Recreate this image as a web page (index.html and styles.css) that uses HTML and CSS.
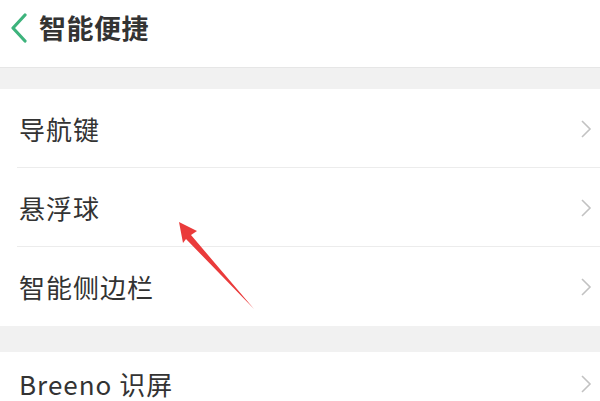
FILE: index.html
```html
<!DOCTYPE html>
<html>
<head>
<meta charset="utf-8">
<link rel="stylesheet" href="styles.css">
</head>
<body>
<div class="page">
  <header class="header">
    <svg class="back" width="20" height="30" viewBox="0 0 20 30"><path d="M16 2 L4 15 L16 28" fill="none" stroke="#3db37c" stroke-width="3.2" stroke-linecap="round" stroke-linejoin="round"/></svg>
    <h1 class="title">智能便捷</h1>
  </header>
  <div class="gap gap1"></div>
  <section class="card">
    <div class="row"><span class="label">导航键</span><svg class="chev" width="12" height="20" viewBox="0 0 12 20"><path d="M2 2 L10 10 L2 18" fill="none" stroke="#c2c2c2" stroke-width="1.6"/></svg></div>
    <div class="row"><span class="label">悬浮球</span><svg class="chev" width="12" height="20" viewBox="0 0 12 20"><path d="M2 2 L10 10 L2 18" fill="none" stroke="#c2c2c2" stroke-width="1.6"/></svg></div>
    <div class="row last"><span class="label">智能侧边栏</span><svg class="chev" width="12" height="20" viewBox="0 0 12 20"><path d="M2 2 L10 10 L2 18" fill="none" stroke="#c2c2c2" stroke-width="1.6"/></svg></div>
  </section>
  <div class="gap gap2"></div>
  <section class="card bottom">
    <div class="row last"><span class="label">Breeno 识屏</span><svg class="chev" width="12" height="20" viewBox="0 0 12 20"><path d="M2 2 L10 10 L2 18" fill="none" stroke="#c2c2c2" stroke-width="1.6"/></svg></div>
  </section>
  <svg class="pointer" width="600" height="401" viewBox="0 0 600 401">
    <polygon points="179,222 197,231 191,235 254,309 186,239 183,243" fill="#ea3b3b"/>
  </svg>
</div>
</body>
</html>
```
FILE: styles.css
```css
* { box-sizing: border-box; margin: 0; padding: 0; }
html, body { width: 600px; height: 401px; overflow: hidden; background: #fff; }
body { font-family: "Noto Sans CJK SC", "Noto Sans", sans-serif; color: #333; }
.page { position: relative; width: 600px; height: 401px; overflow: hidden; }
.header { height: 67px; display: flex; align-items: center; padding-left: 9px; gap: 10px; padding-bottom: 12px; }
.back { display: block; }
.title { font-size: 27px; font-weight: 700; color: #333; letter-spacing: 0.5px; }
.gap { background: #f1f1f1; border-top: 1px solid #e6e6e6; }
.gap1 { height: 22px; }
.gap2 { height: 26px; border-top: none; }
.card { background: #fff; }
.row { height: 79px; display: flex; align-items: center; justify-content: space-between; padding: 0 8px 0 19px; position: relative; }
.row::after { content: ""; position: absolute; left: 17px; right: 0; bottom: 0; height: 1px; background: #ececec; }
.row.last::after { display: none; }
.bottom .row { height: 64px; }
.label { font-size: 26px; line-height: 32px; color: #333; letter-spacing: 1px; }
.chev { display: block; }
.pointer { position: absolute; left: 0; top: 0; pointer-events: none; }
```
